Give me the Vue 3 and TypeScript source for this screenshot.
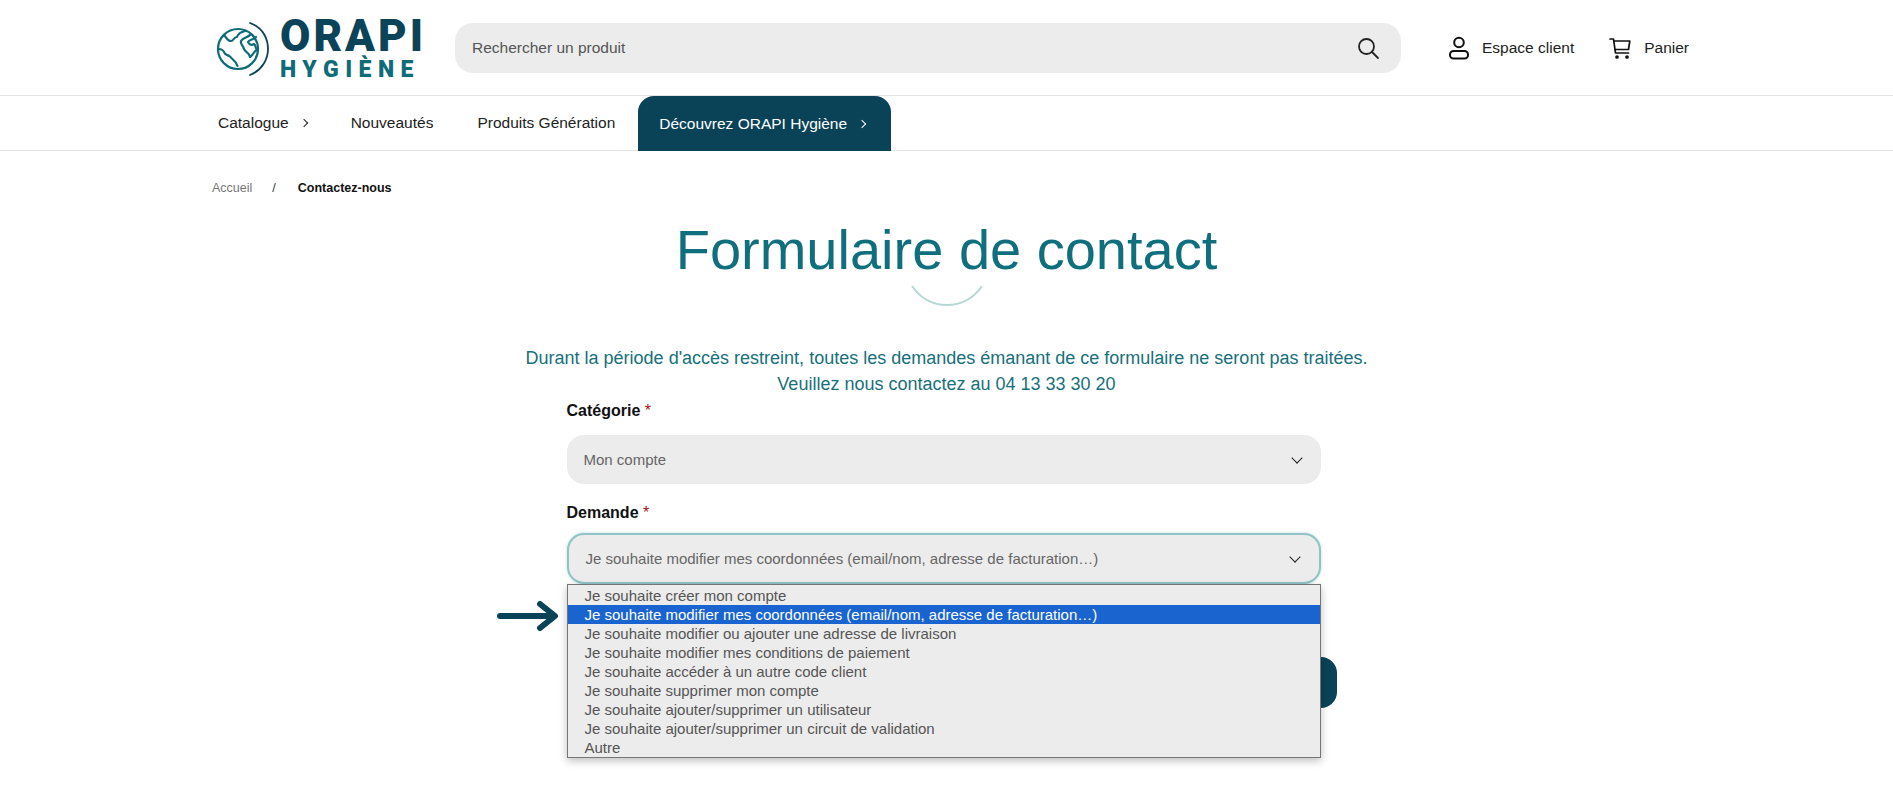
<script setup lang="ts">
import { ref } from 'vue';

const navLinks = ['Nouveautés', 'Produits Génération'];

const options = [
  'Je souhaite créer mon compte',
  'Je souhaite modifier mes coordonnées (email/nom, adresse de facturation…)',
  'Je souhaite modifier ou ajouter une adresse de livraison',
  'Je souhaite modifier mes conditions de paiement',
  'Je souhaite accéder à un autre code client',
  'Je souhaite supprimer mon compte',
  'Je souhaite ajouter/supprimer un utilisateur',
  'Je souhaite ajouter/supprimer un circuit de validation',
  'Autre'
];

const selected = ref(1);
</script>

<template>
  <div class="page">
    <header class="top">
      <div class="logo">
        <svg class="globe" width="64" height="60" viewBox="0 0 64 60" fill="none" stroke="#0f6b78" stroke-width="2.2" stroke-linejoin="round" stroke-linecap="round">
          <circle cx="26" cy="30" r="20" />
          <path d="M12 16c3 3 3 6 7 6 3 0 2-4 6-4 1-3 4-5 8-6M39 15c-3 4-8 3-10 7-1 3 2 4 3 8 2 4 5 3 6 8 3-2 4-6 7-7-2-2-1-5-3-6-3 2-5 0-6-2 1-3 6-2 8-5" />
          <path d="M6.500 30c3 0 5 1 6 4 1 2 4 2 6 4 2 3 5 3 7 9" />
          <path stroke="#0d4456" d="M38 4c14 5 18 17 18 26s-5 21-18 26" stroke-width="1.800" />
        </svg>
        <div class="logo-text">
          <span class="logo-main">ORAPI</span>
          <span class="logo-sub">HYGIÈNE</span>
        </div>
      </div>
      <div class="search">
        <span>Rechercher un produit</span>
        <svg width="24" height="24" viewBox="0 0 24 24" fill="none" stroke="#222" stroke-width="1.800" stroke-linecap="round">
          <circle cx="10.500" cy="10.500" r="7.500" />
          <path d="M16 16l6 6" />
        </svg>
      </div>
      <a class="top-link account">
        <svg width="22" height="24" viewBox="0 0 22 24" fill="none" stroke="#111" stroke-width="2">
          <circle cx="11" cy="6.500" r="4.800" />
          <rect x="2" y="15" width="18" height="7.500" rx="3.500" />
        </svg>
        Espace client
      </a>
      <a class="top-link cart">
        <svg width="24" height="24" viewBox="0 0 24 24" fill="none" stroke="#111" stroke-width="1.700" stroke-linecap="round" stroke-linejoin="round">
          <path d="M2 3h3.500l2 14h13" />
          <path d="M5.800 5h16l-1.300 8.500H7" />
          <circle cx="9" cy="21" r="1" fill="#111" />
          <circle cx="19" cy="21" r="1" fill="#111" />
        </svg>
        Panier
      </a>
    </header>

    <nav class="nav">
      <a class="nav-item catalogue">Catalogue <i class="chev"></i></a>
      <a v-for="link in navLinks" :key="link" class="nav-item">{{ link }}</a>
      <a class="nav-item discover">Découvrez ORAPI Hygiène <i class="chev"></i></a>
    </nav>

    <div class="crumbs">
      <span class="crumb-home">Accueil</span>
      <span class="crumb-sep">/</span>
      <strong>Contactez-nous</strong>
    </div>

    <main class="content">
      <h1>Formulaire de contact</h1>
      <svg class="arc" width="72" height="22" viewBox="0 0 72 22" fill="none" stroke="#b5d8d5" stroke-width="2">
        <path d="M1 1c9 13 21 19 35 19s26-6 35-19" />
      </svg>
      <p class="notice">
        Durant la période d'accès restreint, toutes les demandes émanant de ce formulaire ne seront pas traitées.<br />
        Veuillez nous contactez au 04 13 33 30 20
      </p>

      <form class="form">
        <label>Catégorie <em>*</em></label>
        <div class="select">
          <span>Mon compte</span>
          <i class="chev-down"></i>
        </div>

        <label class="second">Demande <em>*</em></label>
        <div class="select focused">
          <span>{{ options[selected] }}</span>
          <i class="chev-down"></i>
          <ul class="list">
            <li v-for="(opt, i) in options" :key="opt" :class="{ active: i === selected }">{{ opt }}</li>
          </ul>
          <svg class="pointer" width="62" height="30" viewBox="0 0 62 30" fill="none" stroke="#0a4358" stroke-width="6" stroke-linecap="round" stroke-linejoin="round">
            <path d="M3 15h54M43 3l15 12-15 12" />
          </svg>
        </div>

        <div class="submit-row">
          <button type="button" class="submit">Envoyer</button>
        </div>
      </form>
    </main>
  </div>
</template>

<style scoped>
.page {
  font-family: "Liberation Sans", Arial, sans-serif;
  color: #111;
  height: 785px;
  overflow: hidden;
}

.top {
  height: 96px;
  box-sizing: border-box;
  padding-left: 212px;
  display: flex;
  align-items: center;
  border-bottom: 1px solid #e4e4e4;
}

.logo {
  width: 243px;
  display: flex;
  align-items: center;
}

.globe {
  margin-right: 4px;
  margin-top: 2px;
}

.logo-text {
  display: flex;
  flex-direction: column;
  font-weight: 700;
  line-height: 1;
}

.logo-main {
  font-family: "Roboto", sans-serif;
  font-weight: 900;
  font-size: 44px;
  letter-spacing: 3px;
  color: #0b4459;
  height: 44px;
}

.logo-sub {
  font-family: "Roboto", sans-serif;
  font-weight: 900;
  font-size: 23px;
  letter-spacing: 6.500px;
  color: #0f6b78;
}

.search {
  width: 946px;
  height: 50px;
  box-sizing: border-box;
  padding: 0 21px 0 17px;
  background: #ececec;
  border-radius: 18px;
  display: flex;
  align-items: center;
  justify-content: space-between;
  font-size: 15.500px;
  color: #555;
}

.top-link {
  display: flex;
  align-items: center;
  gap: 12px;
  font-size: 15.500px;
  color: #222;
}

.account {
  margin-left: 47px;
}

.cart {
  margin-left: 34px;
}

.nav {
  height: 55px;
  box-sizing: border-box;
  padding-left: 218px;
  display: flex;
  align-items: stretch;
  border-bottom: 1px solid #e4e4e4;
  font-size: 15.500px;
}

.nav-item {
  display: flex;
  align-items: center;
  margin-right: 44px;
  color: #222;
}

.catalogue .chev {
  margin-left: 12px;
}

.chev {
  width: 5px;
  height: 5px;
  border-top: 1.500px solid currentColor;
  border-right: 1.500px solid currentColor;
  transform: rotate(45deg);
  display: inline-block;
}

.discover {
  margin-left: -21px;
  padding: 0 26px 0 21px;
  background: #0a4358;
  color: #fff;
  border-radius: 16px 16px 0 0;
  margin-right: 0;
  margin-bottom: -1px;
}

.discover .chev {
  margin-left: 12px;
}

.crumbs {
  padding: 29px 0 0 212px;
  font-size: 12.500px;
  line-height: 16px;
  color: #777;
  display: flex;
}

.crumb-sep {
  margin: 0 22px 0 20px;
  color: #333;
}

.crumbs strong {
  color: #111;
}

.content {
  display: flex;
  flex-direction: column;
  align-items: center;
}

h1 {
  margin: 22px 0 0;
  font-size: 56px;
  line-height: 64px;
  font-weight: 400;
  color: #0f6f7c;
}

.arc {
  margin-top: 3px;
}

.notice {
  margin: 38px 0 0;
  text-align: center;
  font-size: 18px;
  line-height: 26px;
  color: #17707a;
}

.form {
  width: 754px;
  margin-left: -6px;
  margin-top: 2px;
  display: flex;
  flex-direction: column;
}

label {
  font-size: 16px;
  font-weight: 700;
  line-height: 24px;
  margin-bottom: 12px;
}

label.second {
  margin-top: 17px;
  margin-bottom: 8px;
}

label em {
  font-style: normal;
  font-weight: 400;
  color: #a11;
}

.select {
  height: 49px;
  box-sizing: border-box;
  padding: 0 17px;
  background: #ececec;
  border-radius: 17px;
  display: flex;
  align-items: center;
  justify-content: space-between;
  font-size: 15px;
  color: #666;
  position: relative;
}

.focused {
  height: 51px;
  border: 2px solid #8fc3c7;
  box-shadow: 0 0 3px #b9d9db;
}

.chev-down {
  width: 7px;
  height: 7px;
  border-right: 1.700px solid #222;
  border-bottom: 1.700px solid #222;
  transform: rotate(45deg);
  margin: -3px 3px 0 0;
}

.list {
  position: absolute;
  left: -2px;
  top: 49px;
  z-index: 2;
  width: 754px;
  box-sizing: border-box;
  margin: 0;
  padding: 1px 0 0;
  list-style: none;
  background: #ececec;
  border: 1px solid #767676;
  box-shadow: 0 3px 8px rgba(0, 0, 0, 0.25);
  font-size: 15px;
  color: #555;
  height: 174px;
}

.list li {
  height: 19px;
  line-height: 19px;
  padding-left: 17px;
}

.list li.active {
  background: #1a64d0;
  color: #fff;
}

.pointer {
  position: absolute;
  left: -72px;
  top: 66px;
  z-index: 3;
}

.submit-row {
  display: flex;
  justify-content: flex-end;
  margin-top: 73px;
  margin-right: -16px;
}

.submit {
  width: 200px;
  height: 51px;
  border: 0;
  border-radius: 16px;
  background: #0a4358;
  color: #fff;
  font: inherit;
}
</style>

<style>
html, body {
  background: #fff;
}
</style>
